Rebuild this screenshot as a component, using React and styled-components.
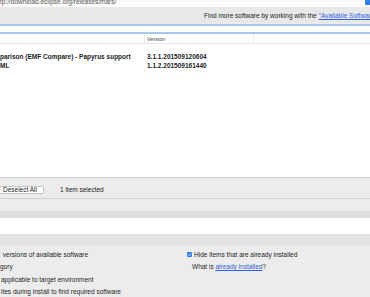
import React from 'react';
import styled, { createGlobalStyle } from 'styled-components';

const GlobalStyle = createGlobalStyle`
  html, body {
    margin: 0;
    padding: 0;
    background: #ffffff;
  }
  body {
    font-family: 'Liberation Sans', Arial, Helvetica, sans-serif;
    font-size: 6.5px;
    color: #1c1c1c;
  }
`;

const Window = styled.div`
  width: 370px;
  height: 297px;
  overflow: hidden;
  display: flex;
  flex-direction: column;
  background: #ececec;
`;

const UrlRow = styled.div`
  height: 7px;
  flex: none;
  display: flex;
  align-items: flex-end;
  background: #fbfbfb;
  overflow: hidden;
`;

const UrlText = styled.span`
  line-height: 10px;
  color: #555;
  white-space: nowrap;
`;

const BlueButtonEdge = styled.span`
  margin-left: auto;
  align-self: flex-start;
  width: 5px;
  height: 5px;
  background: #2f7de6;
  border-radius: 1px 0 0 1px;
`;

const InfoBar = styled.div`
  height: 16px;
  flex: none;
  display: flex;
  align-items: center;
  padding-left: 204px;
  background: #e8e8e8;
  white-space: nowrap;
  overflow: hidden;
`;

const Link = styled.a`
  color: #2f5fe0;
  text-decoration: underline;
  margin-left: ${(p) => (p.gap ? '2px' : '0')};
`;

const FilterBox = styled.div`
  flex: none;
  margin-top: 1px;
  height: 6px;
  background: #fff;
  border-top: 2px solid #a8c8f0;
  border-bottom: 2px solid #a8c8f0;
`;

const Table = styled.div`
  flex: none;
  height: 144px;
  box-sizing: border-box;
  display: flex;
  flex-direction: column;
  background: #fff;
  border-bottom: 1px solid #cfcfcf;
`;

const HeaderRow = styled.div`
  height: 9px;
  display: grid;
  grid-template-columns: 145px 109px 1fr;
  border-bottom: 1px solid #e4e4e4;
`;

const HeaderCell = styled.div`
  display: flex;
  align-items: center;
  padding-left: 2px;
  font-size: 5.5px;
  color: #444;
  border-right: ${(p) => (p.last ? 'none' : '1px solid #ececec')};
`;

const Rows = styled.div`
  padding-top: 8px;
`;

const Row = styled.div`
  height: 9px;
  display: grid;
  grid-template-columns: 147px 1fr;
  align-items: center;
  font-weight: bold;
  white-space: nowrap;
`;

const ButtonBar = styled.div`
  flex: none;
  height: 21px;
  display: flex;
  align-items: flex-start;
  padding-top: 8px;
  box-sizing: border-box;
  border-bottom: 1px solid #d3d3d3;
`;

const SmallButton = styled.button`
  height: 8px;
  width: 45px;
  margin: 0 0 0 -1px;
  padding: 0 0 0 3px;
  box-sizing: border-box;
  text-align: left;
  font: inherit;
  line-height: 6px;
  color: #1c1c1c;
  background: #fff;
  border: 1px solid #c3c3c3;
  border-radius: 2px;
`;

const Status = styled.span`
  margin-left: 16px;
  line-height: 8px;
`;

const Band = styled.div`
  flex: none;
  height: ${(p) => p.h}px;
  background: ${(p) => p.bg};
`;

const Options = styled.div`
  flex: 1;
  display: grid;
  grid-template-columns: 187px 1fr;
  align-content: start;
  padding-top: 4px;
  line-height: 12.3px;
`;

const Column = styled.div`
  display: flex;
  flex-direction: column;
  white-space: nowrap;
`;

const OptionLine = styled.div`
  display: flex;
  align-items: center;
  height: 12.3px;
  padding-left: ${(p) => p.indent || 0}px;
`;

const Check = () => (
  <svg width="5" height="5" viewBox="0 0 10 10" style={{ marginRight: 2, marginTop: -1 }}>
    <rect x="0" y="0" width="10" height="10" rx="2" fill="#2d7ce6" />
    <path d="M2.3 5.2 L4.3 7.2 L7.8 2.8" stroke="#fff" strokeWidth="1.6" fill="none" />
  </svg>
);

export default function App() {
  return (
    <>
      <GlobalStyle />
      <Window>
        <UrlRow>
          <UrlText>tp://download.eclipse.org/releases/mars/</UrlText>
          <BlueButtonEdge />
        </UrlRow>
        <InfoBar>
          Find more software by working with the
          <Link gap href="#">"Available Software Sites" preferences.</Link>
        </InfoBar>
        <FilterBox />
        <Table>
          <HeaderRow>
            <HeaderCell />
            <HeaderCell>Version</HeaderCell>
            <HeaderCell last />
          </HeaderRow>
          <Rows>
            <Row>
              <span>parison (EMF Compare) - Papyrus support</span>
              <span>3.1.1.201509120604</span>
            </Row>
            <Row>
              <span>ML</span>
              <span>1.1.2.201509161440</span>
            </Row>
          </Rows>
        </Table>
        <ButtonBar>
          <SmallButton>Deselect All</SmallButton>
          <Status>1 item selected</Status>
        </ButtonBar>
        <Band h={12} bg="#ececec" />
        <Band h={7} bg="#dedede" />
        <Band h={16} bg="#ffffff" />
        <Band h={11} bg="#e3e3e3" />
        <Options>
          <Column>
            <OptionLine indent={1}>&nbsp;versions of available software</OptionLine>
            <OptionLine>gory</OptionLine>
            <OptionLine indent={1}>applicable to target environment</OptionLine>
            <OptionLine indent={1}>ites during install to find required software</OptionLine>
          </Column>
          <Column>
            <OptionLine>
              <Check />
              Hide items that are already installed
            </OptionLine>
            <OptionLine indent={5}>
              What is&nbsp;<Link href="#">already installed</Link>?
            </OptionLine>
          </Column>
        </Options>
      </Window>
    </>
  );
}
